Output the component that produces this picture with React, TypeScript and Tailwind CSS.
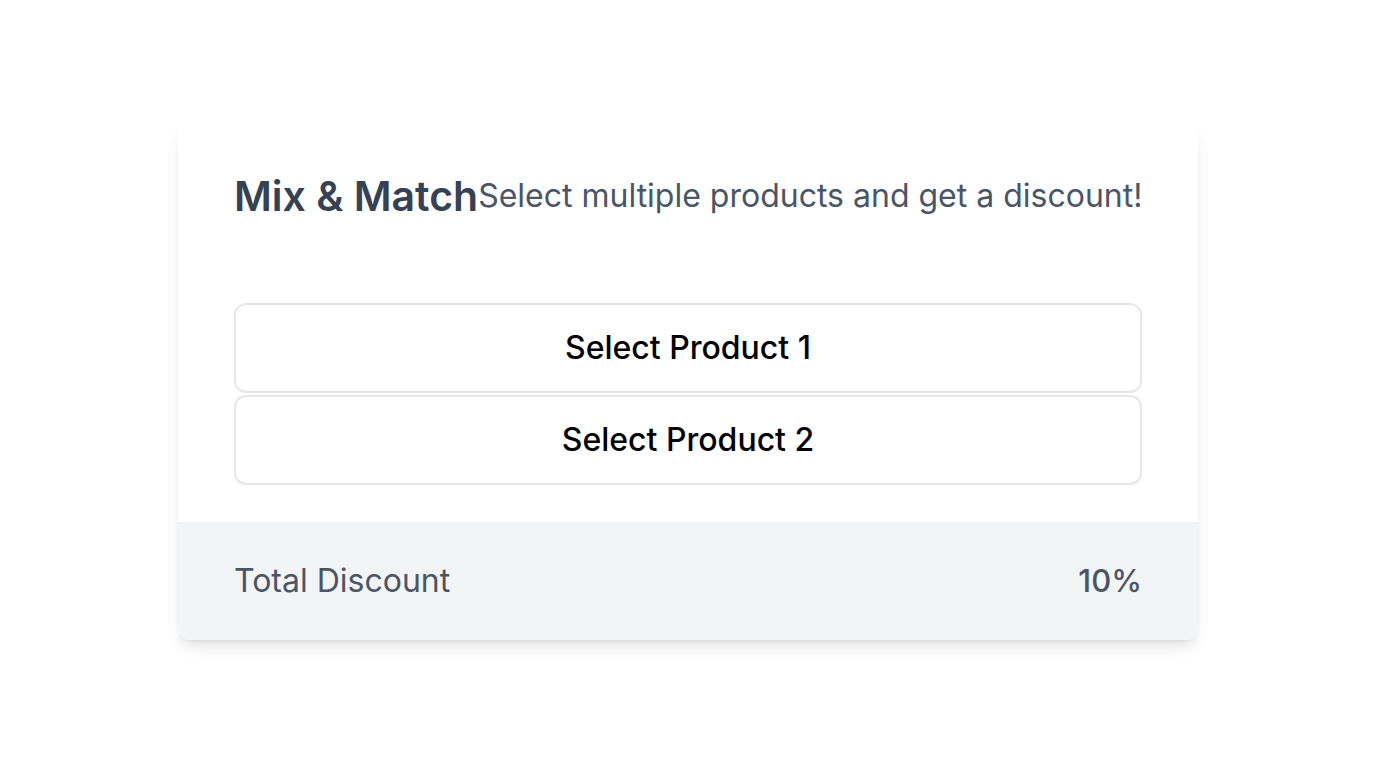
import React from "react";

export default function App() {
  return (
    <div className="min-h-screen bg-white pt-[120px]" style={{ fontFamily: "Inter, 'Noto Sans', sans-serif" }}>
      <div className="mx-auto w-[1020px] overflow-hidden rounded-xl bg-white shadow-lg">
        <div className="px-14 pt-14 pb-[37px]">
          <div className="flex h-10 items-center justify-between whitespace-nowrap">
            <h1 className="shrink-0 text-[41px] leading-none font-semibold text-gray-700">Mix &amp; Match</h1>
            <p className="shrink-0 text-[32px] leading-none text-gray-600">Select multiple products and get a discount!</p>
          </div>
          <div className="mt-[87px] flex flex-col gap-[2px]">
            <button className="h-[90px] w-full rounded-xl border-2 border-gray-200 bg-white text-[32px] font-medium text-black">
              Select Product 1
            </button>
            <button className="h-[90px] w-full rounded-xl border-2 border-gray-200 bg-white text-[32px] font-medium text-black">
              Select Product 2
            </button>
          </div>
        </div>
        <div className="flex h-[118px] items-center justify-between bg-gray-100 px-14">
          <span className="text-[32px] text-gray-600">Total Discount</span>
          <span className="text-[31px] font-medium text-gray-600">10%</span>
        </div>
      </div>
    </div>
  );
}
